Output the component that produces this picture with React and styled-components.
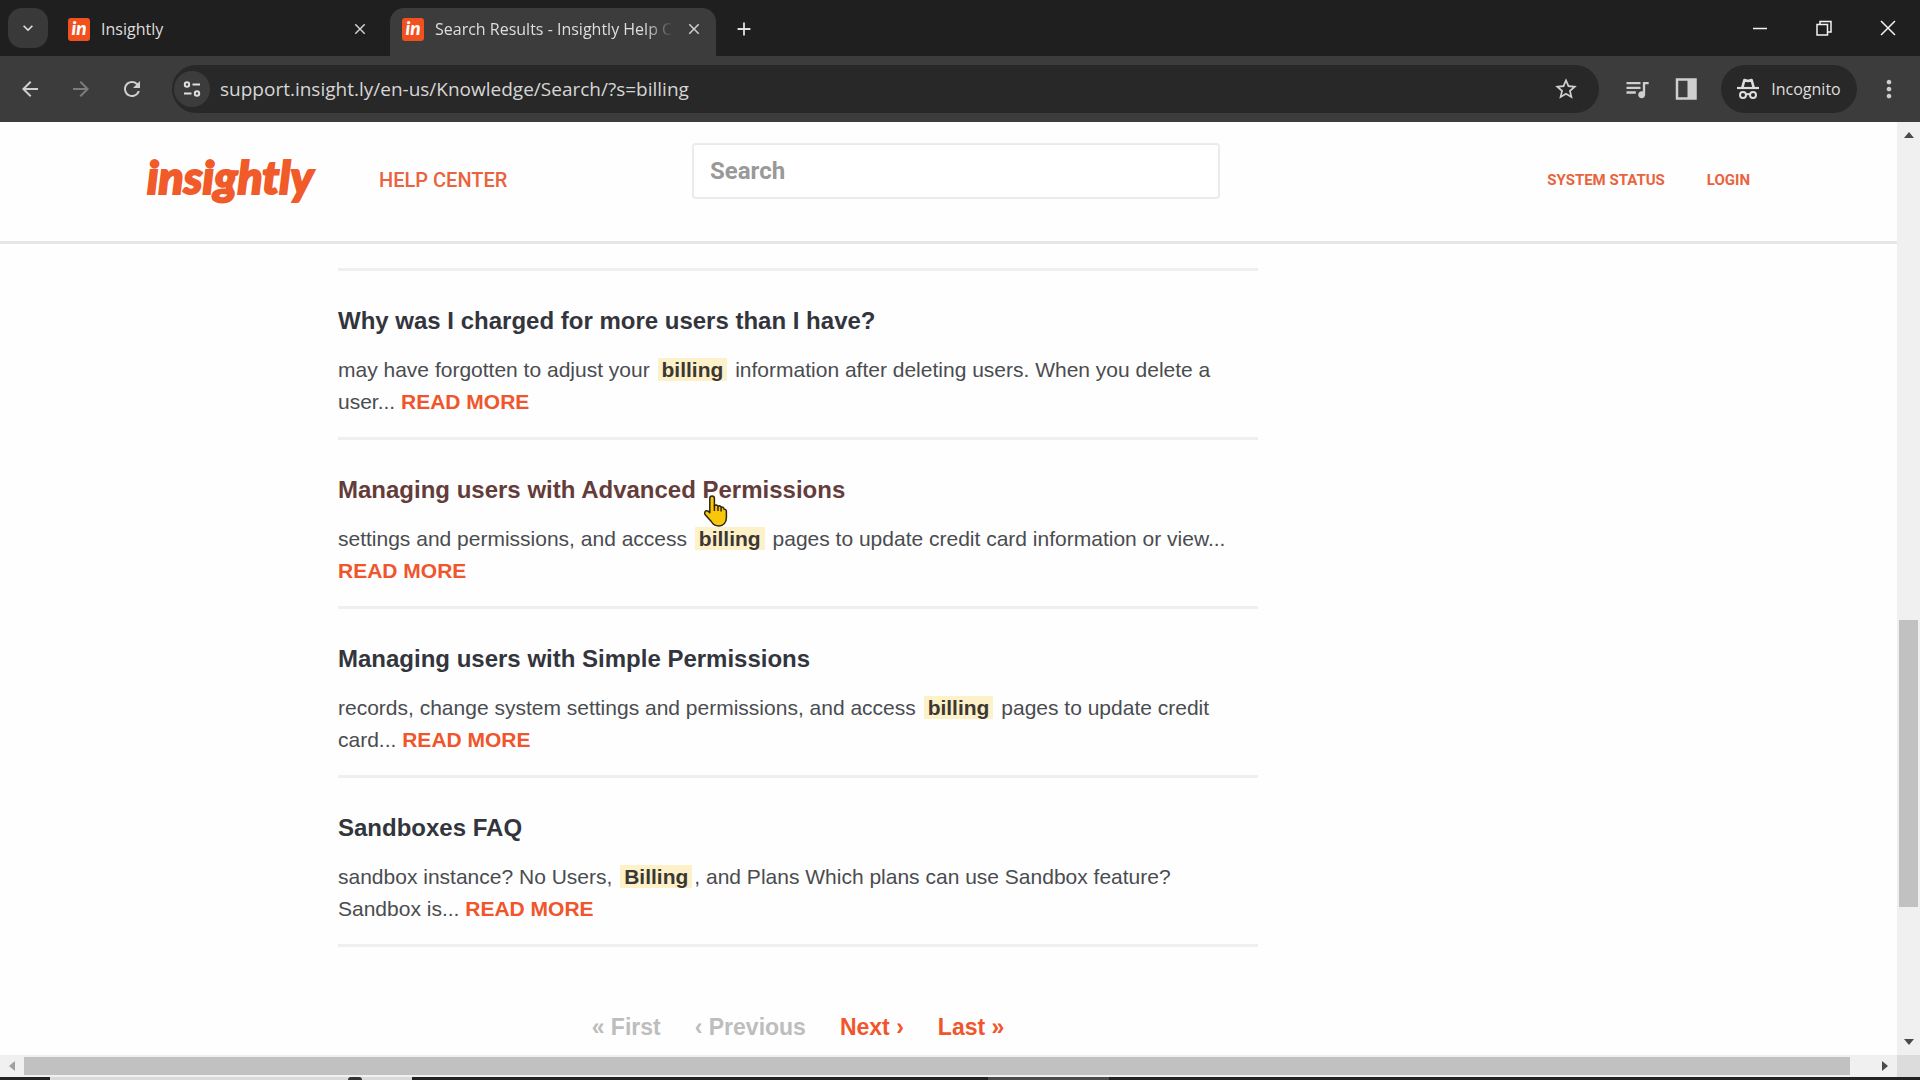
import React, { useState } from 'react'
import styled, { createGlobalStyle } from 'styled-components'
import { MdArrowBack, MdArrowForward, MdRefresh, MdStarOutline, MdOutlineQueueMusic, MdMoreVert, MdAdd, MdClose, MdExpandMore } from 'react-icons/md'

const results = [
  {
    title: 'Why was I charged for more users than I have?',
    before: 'may have forgotten to adjust your ',
    hit: 'billing',
    after: ' information after deleting users. When you delete a user... ',
  },
  {
    title: 'Managing users with Advanced Permissions',
    before: 'settings and permissions, and access ',
    hit: 'billing',
    after: ' pages to update credit card information or view... ',
    hovered: true,
  },
  {
    title: 'Managing users with Simple Permissions',
    before: 'records, change system settings and permissions, and access ',
    hit: 'billing',
    after: ' pages to update credit card... ',
  },
  {
    title: 'Sandboxes FAQ',
    before: 'sandbox instance? No Users, ',
    hit: 'Billing',
    after: ', and Plans Which plans can use Sandbox feature? Sandbox is... ',
  },
]

function TabItem({ title, active }) {
  return (
    <Tab $active={active}>
      <Favicon>in</Favicon>
      <TabTitle $active={active}>{title}</TabTitle>
      <IconButton aria-label="Close tab" $size={20}><MdClose size={18} /></IconButton>
    </Tab>
  )
}

function HandCursor() {
  return (
    <Cursor width="24" height="34" viewBox="0 0 24 34" aria-hidden="true">
      <path
        d="M8 2c1.700 0 2.400 1 2.400 2.500v7l1-.5c1.300-.3 2.200.3 2.600 1.200 1.300-.7 2.600-.2 3.100 1 1.400-.5 2.900.3 3 2 1.300-.2 2.300.8 2.300 2.300v6c0 5-3 8.500-7.500 8.500-4 0-6-1.500-7.600-4.500L1 20.500c-.8-1.700-.2-3.300 1.200-3.700 1.300-.3 2.500.5 3.600 2V4.500C5.800 3 6.400 2 8 2z"
        fill="#f8c60b" stroke="#2e2610" strokeWidth="1.500" strokeLinejoin="round"
      />
      <path d="M10.400 11v6M14 12.500V17M17.100 13.500V17.500" stroke="#2e2610" strokeWidth="1.500" fill="none" />
    </Cursor>
  )
}

export default function App() {
  const [query, setQuery] = useState('')
  const [url, setUrl] = useState('support.insight.ly/en-us/Knowledge/Search/?s=billing')

  return (
    <Window>
      <GlobalStyle />
      <TabStrip>
        <TabMenu aria-label="Search tabs"><MdExpandMore size={20} /></TabMenu>
        <TabItem title="Insightly" />
        <TabItem title="Search Results - Insightly Help Center" active />
        <NewTab aria-label="New tab"><MdAdd size={22} /></NewTab>
        <WindowButtons>
          <WindowButton aria-label="Minimize">
            <svg width="16" height="16"><path d="M1 8.500h14" stroke="currentColor" strokeWidth="1.500" /></svg>
          </WindowButton>
          <WindowButton aria-label="Restore">
            <svg width="16" height="16" fill="none" stroke="currentColor" strokeWidth="1.500">
              <path d="M1 4.500h10.500V15H1zM4 4.500V1.500h11V12h-3.500" />
            </svg>
          </WindowButton>
          <WindowButton aria-label="Close">
            <svg width="16" height="16"><path d="M1 1l14 14M15 1L1 15" stroke="currentColor" strokeWidth="1.500" /></svg>
          </WindowButton>
        </WindowButtons>
      </TabStrip>

      <Toolbar>
        <NavButtons>
          <IconButton aria-label="Back" $size={24}><MdArrowBack size={24} /></IconButton>
          <IconButton aria-label="Forward" $size={24} disabled><MdArrowForward size={24} /></IconButton>
          <IconButton aria-label="Reload" $size={24}><MdRefresh size={26} /></IconButton>
        </NavButtons>
        <AddressBar>
          <SiteInfo aria-label="Site information">
            <svg width="18" height="18" fill="none" stroke="currentColor" strokeWidth="2">
              <circle cx="4" cy="4.500" r="2.200" />
              <path d="M9.500 4.500H17M1 13.500h7.500" />
              <circle cx="14" cy="13.500" r="2.200" />
            </svg>
          </SiteInfo>
          <AddressInput aria-label="Address" value={url} onChange={(e) => setUrl(e.target.value)} />
          <IconButton aria-label="Bookmark" $size={26}><MdStarOutline size={26} /></IconButton>
        </AddressBar>
        <IconButton aria-label="Media controls" $size={28}><MdOutlineQueueMusic size={28} /></IconButton>
        <IconButton aria-label="Side panel" $size={22}>
          <svg width="22" height="22">
            <path d="M2 1.500h18.500v19H2z" fill="none" stroke="currentColor" strokeWidth="2.500" />
            <path d="M12.500 1h8v20h-8z" fill="currentColor" />
          </svg>
        </IconButton>
        <Incognito>
          <svg width="22" height="22" viewBox="0 0 22 22" fill="none" stroke="currentColor" strokeWidth="2">
            <path d="M0 10h22" strokeWidth="2.200" />
            <path d="M5.200 10l2.200-8 3.600 1 3.600-1 2.200 8" strokeWidth="2.600" strokeLinejoin="round" />
            <circle cx="6" cy="17" r="3" />
            <circle cx="16" cy="17" r="3" />
            <path d="M9 16.700q2-1.500 4 0" />
          </svg>
          Incognito
        </Incognito>
        <IconButton aria-label="Menu" $size={28}><MdMoreVert size={28} /></IconButton>
      </Toolbar>

      <Viewport>
        <Page>
          <Header>
            <HeaderInner>
              <Logo href="#home">insightly</Logo>
              <HelpLink href="#help">HELP CENTER</HelpLink>
              <SearchInput
                type="search"
                aria-label="Search"
                placeholder="Search"
                value={query}
                onChange={(e) => setQuery(e.target.value)}
              />
              <HeaderNav>
                <NavLink href="#status">SYSTEM STATUS</NavLink>
                <NavLink href="#login">LOGIN</NavLink>
              </HeaderNav>
            </HeaderInner>
          </Header>

          <Content>
            <Results>
              {results.map((item) => (
                <Result key={item.title}>
                  <ResultTitle>
                    <TitleLink href="#article" $hovered={item.hovered}>
                      {item.title}
                      {item.hovered && <HandCursor />}
                    </TitleLink>
                  </ResultTitle>
                  <Excerpt>
                    {item.before}
                    <Mark>{item.hit}</Mark>
                    {item.after}
                    <ReadMore href="#article">READ MORE</ReadMore>
                  </Excerpt>
                </Result>
              ))}
              <Pager aria-label="Pagination">
                <PageButton disabled>« First</PageButton>
                <PageButton disabled>‹ Previous</PageButton>
                <PageButton>Next ›</PageButton>
                <PageButton>Last »</PageButton>
              </Pager>
            </Results>
          </Content>
        </Page>

        <VerticalBar>
          <Arrow viewBox="0 0 10 10"><path d="M0 8l5-6 5 6z" /></Arrow>
          <VerticalTrack>
            <VerticalThumb />
          </VerticalTrack>
          <Arrow viewBox="0 0 10 10"><path d="M0 2l5 6 5-6z" /></Arrow>
        </VerticalBar>
      </Viewport>

      <HorizontalBar>
        <Arrow viewBox="0 0 10 10" $faded><path d="M8 0L2 5l6 5z" /></Arrow>
        <HorizontalThumb />
        <Arrow viewBox="0 0 10 10"><path d="M2 0l6 5-6 5z" /></Arrow>
        <Corner />
      </HorizontalBar>
      <Taskbar>
        <TaskbarSearch>
          <TaskbarIcon />
        </TaskbarSearch>
        <TaskbarApp />
      </Taskbar>
    </Window>
  )
}

const GlobalStyle = createGlobalStyle`
  * {
    box-sizing: border-box;
  }
  body {
    margin: 0;
    background: #fefefe;
    font-family: 'Liberation Sans', Arial, sans-serif;
  }
  button {
    padding: 0;
    border: 0;
    background: none;
    font: inherit;
    color: inherit;
  }
  a {
    text-decoration: none;
  }
`

const Window = styled.div`
  display: flex;
  flex-direction: column;
  height: 100vh;
  overflow: hidden;
`

// browser chrome
const TabStrip = styled.div`
  display: flex;
  align-items: flex-end;
  height: 56px;
  padding-left: 8px;
  background: #1f1f1f;
  color: #dedede;
  font-family: 'Open Sans', sans-serif;
`
const TabMenu = styled.button`
  display: flex;
  align-items: center;
  justify-content: center;
  width: 40px;
  height: 40px;
  margin-bottom: 8px;
  border-radius: 14px;
  background: #393939;
`
const Tab = styled.div`
  display: flex;
  align-items: center;
  gap: 11px;
  width: 326px;
  height: 48px;
  padding: 0 12px 6px;
  margin-left: 8px;
  border-radius: 14px 14px 0 0;
  background: ${(props) => (props.$active ? '#3c3c3c' : 'transparent')};
`
const Favicon = styled.span`
  flex: none;
  width: 22px;
  height: 23px;
  border-radius: 3px;
  background: #f1511f;
  color: #fff;
  font: italic 900 19px/20px Lato, sans-serif;
  text-align: center;
`
const TabTitle = styled.span`
  flex: 1;
  overflow: hidden;
  font-size: 16px;
  line-height: 24px;
  white-space: nowrap;
  mask-image: ${(props) => (props.$active ? 'linear-gradient(to right, #000 88%, transparent)' : 'none')};
`
const IconButton = styled.button`
  display: flex;
  flex: none;
  align-items: center;
  justify-content: center;
  width: ${(props) => props.$size}px;
  height: ${(props) => props.$size}px;
  color: #cfcfcf;
  &:disabled {
    color: #7c7c7c;
  }
`
const NewTab = styled.button`
  display: flex;
  align-items: center;
  justify-content: center;
  width: 40px;
  height: 40px;
  margin: 0 0 7px 8px;
`
const WindowButtons = styled.div`
  display: flex;
  align-self: stretch;
  margin-left: auto;
`
const WindowButton = styled.button`
  display: flex;
  align-items: center;
  justify-content: center;
  width: 64px;
  height: 56px;
  color: #f2f2f2;
`
const Toolbar = styled.div`
  display: flex;
  align-items: center;
  gap: 24px;
  height: 66px;
  padding: 0 17px 0 18px;
  background: #3c3c3c;
  color: #dedede;
`
const NavButtons = styled.div`
  display: flex;
  gap: 27px;
`
const AddressBar = styled.div`
  display: flex;
  flex: 1;
  align-items: center;
  height: 48px;
  margin-left: 4px;
  padding: 0 20px 0 2px;
  border-radius: 24px;
  background: #282828;
`
const SiteInfo = styled.button`
  display: flex;
  align-items: center;
  justify-content: center;
  width: 36px;
  height: 36px;
  border-radius: 18px;
  background: #3c3c3c;
`
const AddressInput = styled.input`
  flex: 1;
  min-width: 0;
  padding: 0 10px;
  border: 0;
  outline: 0;
  background: none;
  color: #d6d6d6;
  font: 19px 'Open Sans', sans-serif;
`
const Incognito = styled.div`
  display: flex;
  align-items: center;
  justify-content: center;
  gap: 12px;
  width: 136px;
  height: 48px;
  margin-right: -6px;
  border-radius: 24px;
  background: #282828;
  font: 16px 'Open Sans', sans-serif;
`

// help center page
const Viewport = styled.div`
  display: flex;
  flex: 1;
  min-height: 0;
`
const Page = styled.main`
  flex: 1;
  min-width: 0;
  overflow: hidden;
`
const Header = styled.header`
  height: 122px;
  padding-top: 21px;
  border-bottom: 3px solid #e6e6e6;
`
const HeaderInner = styled.div`
  display: flex;
  max-width: 1603px;
  margin: 0 auto;
`
const Logo = styled.a`
  width: 168px;
  color: #f15a29;
  font: italic 900 46px/68px Lato, sans-serif;
  -webkit-text-stroke: 2px #f15a29;
`
const HelpLink = styled.a`
  width: 246px;
  margin-left: 64px;
  color: #e9633d;
  font: 500 20px/74px Roboto, sans-serif;
`
const SearchInput = styled.input`
  flex: 0 1 528px;
  min-width: 0;
  height: 56px;
  margin-left: 67px;
  padding: 0 16px;
  border: 2px solid #ebebeb;
  border-radius: 4px;
  outline: 0;
  background: #fff;
  color: #333;
  font: 700 24px Roboto, sans-serif;
  &::placeholder {
    color: #999;
    opacity: 1;
  }
`
const HeaderNav = styled.nav`
  display: flex;
  gap: 42px;
  margin-left: auto;
`
const NavLink = styled.a`
  color: #e9633d;
  font: 700 15px/74px Roboto, sans-serif;
`
const Content = styled.div`
  display: flex;
  max-width: 1603px;
  margin: 0 auto;
  padding: 24px 191px 0;
`
const Results = styled.section`
  width: 920px;
`
const Result = styled.article`
  padding: 34px 0 19px;
  border-top: 3px solid #efefef;
`
const ResultTitle = styled.h2`
  margin: 0 0 17px;
  font-size: 24px;
  line-height: 32px;
`
const TitleLink = styled.a`
  position: relative;
  color: ${(props) => (props.$hovered ? '#643c3a' : '#33353d')};
`
const Cursor = styled.svg`
  position: absolute;
  top: 18px;
  left: 366px;
`
const Excerpt = styled.p`
  margin: 0;
  padding-right: 16px;
  color: #4a4c50;
  font-size: 21px;
  line-height: 32px;
`
const Mark = styled.mark`
  margin: 0 2px;
  padding: 0 4px;
  background: #fdf1c9;
  color: #3d3733;
  font-weight: 700;
`
const ReadMore = styled.a`
  color: #f0552b;
  font-weight: 700;
`
const Pager = styled.nav`
  display: flex;
  justify-content: center;
  gap: 34px;
  padding-top: 64px;
  border-top: 3px solid #efefef;
`
const PageButton = styled.button`
  color: #f0552b;
  font-size: 23px;
  font-weight: 700;
  line-height: 32px;
  &:disabled {
    color: #bdbdbd;
  }
`

// scrollbars
const VerticalBar = styled.div`
  display: flex;
  flex-direction: column;
  align-items: center;
  width: 23px;
  padding: 8px 0;
  background: #f0f0f0;
`
const Arrow = styled.svg`
  flex: none;
  width: 10px;
  height: 10px;
  fill: ${(props) => (props.$faded ? '#a0a0a0' : '#4a4a4a')};
`
const VerticalTrack = styled.div`
  display: grid;
  flex: 1;
  grid-template-rows: 480fr 287fr 130fr;
`
const VerticalThumb = styled.div`
  grid-row: 2;
  width: 19px;
  background: #c1c1c1;
`
const HorizontalBar = styled.div`
  display: flex;
  align-items: center;
  height: 22px;
  padding-left: 7px;
  background: #f0f0f0;
`
const HorizontalThumb = styled.div`
  flex: 1;
  height: 18px;
  margin: 0 30px 0 7px;
  background: #c1c1c1;
`
const Corner = styled.div`
  width: 23px;
  height: 22px;
  margin-left: 7px;
  background: #dcdcdc;
`
const Taskbar = styled.div`
  display: flex;
  height: 3px;
  padding-left: 50px;
  background: #242122;
`
const TaskbarSearch = styled.div`
  display: flex;
  justify-content: flex-end;
  width: 362px;
  padding-right: 50px;
  background: #dadada;
`
const TaskbarIcon = styled.div`
  width: 14px;
  border-radius: 4px 4px 0 0;
  background: #333;
`
const TaskbarApp = styled.div`
  width: 121px;
  margin-left: 576px;
  background: #4c4a4b;
`
